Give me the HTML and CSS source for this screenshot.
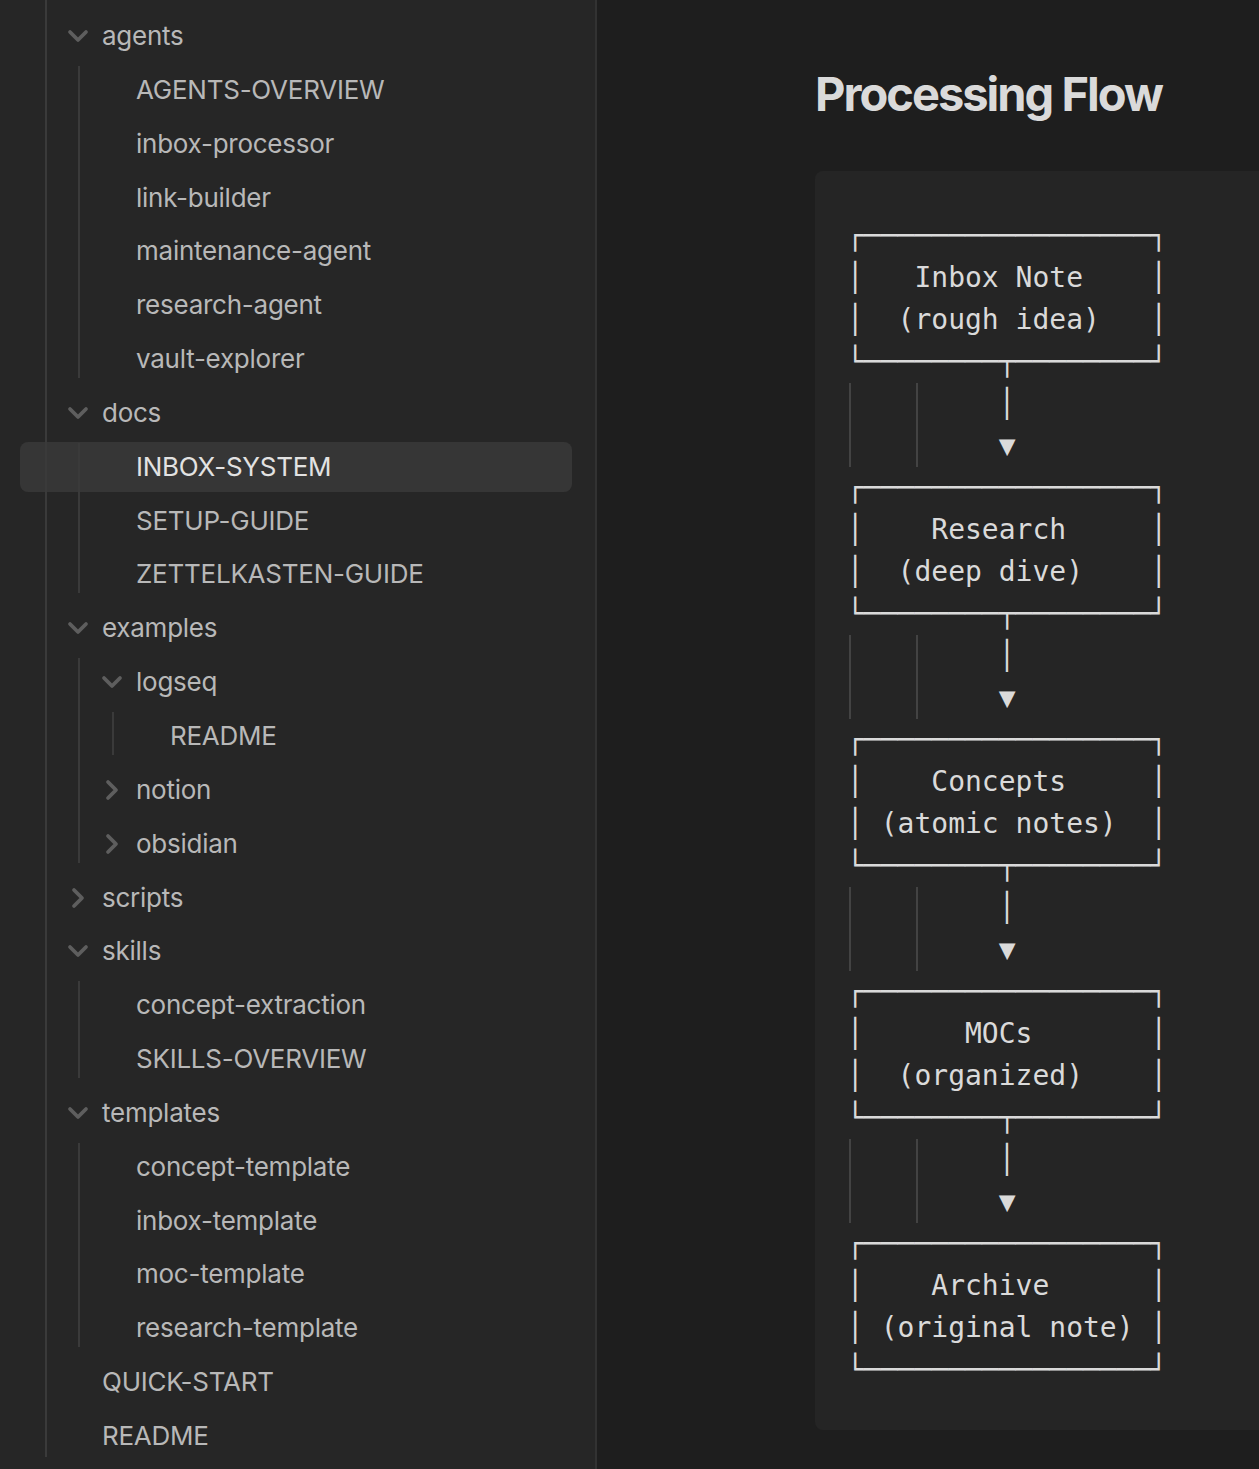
FILE: index.html
```html
<!DOCTYPE html>
<html lang="en">
<head>
<meta charset="utf-8">
<title>INBOX-SYSTEM</title>
<link rel="stylesheet" href="styles.css">
</head>
<body>
<div class="app">
  <aside class="sidebar">
    <div class="tree root">
      <div class="folder">
        <div class="row lvl1"><span class="twist"><svg viewBox="0 0 24 24"><path d="m6 9 6 6 6-6"/></svg></span><span class="label">agents</span></div>
        <div class="children c1">
          <div class="row lvl2"><span class="twist"></span><span class="label">AGENTS-OVERVIEW</span></div>
          <div class="row lvl2"><span class="twist"></span><span class="label">inbox-processor</span></div>
          <div class="row lvl2"><span class="twist"></span><span class="label">link-builder</span></div>
          <div class="row lvl2"><span class="twist"></span><span class="label">maintenance-agent</span></div>
          <div class="row lvl2"><span class="twist"></span><span class="label">research-agent</span></div>
          <div class="row lvl2"><span class="twist"></span><span class="label">vault-explorer</span></div>
        </div>
      </div>
      <div class="folder">
        <div class="row lvl1"><span class="twist"><svg viewBox="0 0 24 24"><path d="m6 9 6 6 6-6"/></svg></span><span class="label">docs</span></div>
        <div class="children c1">
          <div class="row lvl2 active"><span class="twist"></span><span class="label">INBOX-SYSTEM</span></div>
          <div class="row lvl2"><span class="twist"></span><span class="label">SETUP-GUIDE</span></div>
          <div class="row lvl2"><span class="twist"></span><span class="label">ZETTELKASTEN-GUIDE</span></div>
        </div>
      </div>
      <div class="folder">
        <div class="row lvl1"><span class="twist"><svg viewBox="0 0 24 24"><path d="m6 9 6 6 6-6"/></svg></span><span class="label">examples</span></div>
        <div class="children c1">
          <div class="folder">
            <div class="row lvl2"><span class="twist"><svg viewBox="0 0 24 24"><path d="m6 9 6 6 6-6"/></svg></span><span class="label">logseq</span></div>
            <div class="children c2">
              <div class="row lvl3"><span class="twist"></span><span class="label">README</span></div>
            </div>
          </div>
          <div class="row lvl2"><span class="twist"><svg viewBox="0 0 24 24"><path d="m9 18 6-6-6-6"/></svg></span><span class="label">notion</span></div>
          <div class="row lvl2"><span class="twist"><svg viewBox="0 0 24 24"><path d="m9 18 6-6-6-6"/></svg></span><span class="label">obsidian</span></div>
        </div>
      </div>
      <div class="row lvl1"><span class="twist"><svg viewBox="0 0 24 24"><path d="m9 18 6-6-6-6"/></svg></span><span class="label">scripts</span></div>
      <div class="folder">
        <div class="row lvl1"><span class="twist"><svg viewBox="0 0 24 24"><path d="m6 9 6 6 6-6"/></svg></span><span class="label">skills</span></div>
        <div class="children c1">
          <div class="row lvl2"><span class="twist"></span><span class="label">concept-extraction</span></div>
          <div class="row lvl2"><span class="twist"></span><span class="label">SKILLS-OVERVIEW</span></div>
        </div>
      </div>
      <div class="folder">
        <div class="row lvl1"><span class="twist"><svg viewBox="0 0 24 24"><path d="m6 9 6 6 6-6"/></svg></span><span class="label">templates</span></div>
        <div class="children c1">
          <div class="row lvl2"><span class="twist"></span><span class="label">concept-template</span></div>
          <div class="row lvl2"><span class="twist"></span><span class="label">inbox-template</span></div>
          <div class="row lvl2"><span class="twist"></span><span class="label">moc-template</span></div>
          <div class="row lvl2"><span class="twist"></span><span class="label">research-template</span></div>
        </div>
      </div>
      <div class="row lvl1"><span class="twist"></span><span class="label">QUICK-START</span></div>
      <div class="row lvl1"><span class="twist"></span><span class="label">README</span></div>
    </div>
  </aside>
  <main class="main">
    <h1 class="title">Processing Flow</h1>
    <div class="code">
      <div class="ln">┌─────────────────┐</div>
      <div class="ln">│   Inbox Note    │</div>
      <div class="ln">│  (rough idea)   │</div>
      <div class="ln">└────────┬────────┘</div>
      <div class="ln ind">         │</div>
      <div class="ln ind">         ▼</div>
      <div class="ln">┌─────────────────┐</div>
      <div class="ln">│    Research     │</div>
      <div class="ln">│  (deep dive)    │</div>
      <div class="ln">└────────┬────────┘</div>
      <div class="ln ind">         │</div>
      <div class="ln ind">         ▼</div>
      <div class="ln">┌─────────────────┐</div>
      <div class="ln">│    Concepts     │</div>
      <div class="ln">│ (atomic notes)  │</div>
      <div class="ln">└────────┬────────┘</div>
      <div class="ln ind">         │</div>
      <div class="ln ind">         ▼</div>
      <div class="ln">┌─────────────────┐</div>
      <div class="ln">│      MOCs       │</div>
      <div class="ln">│  (organized)    │</div>
      <div class="ln">└────────┬────────┘</div>
      <div class="ln ind">         │</div>
      <div class="ln ind">         ▼</div>
      <div class="ln">┌─────────────────┐</div>
      <div class="ln">│    Archive      │</div>
      <div class="ln">│ (original note) │</div>
      <div class="ln">└─────────────────┘</div>
    </div>
  </main>
</div>
</body>
</html>
```
FILE: styles.css
```css
* { box-sizing: border-box; }
html, body {
  margin: 0;
  padding: 0;
  background: #1e1e1e;
}
.app {
  display: flex;
  width: 1259px;
  height: 1469px;
  overflow: hidden;
}
.sidebar {
  flex: 0 0 597px;
  background: #262626;
  border-right: 2px solid #323232;
  padding: 0 23px 0 20px;
  font-family: Inter, "Noto Sans", sans-serif;
  font-size: 26px;
  letter-spacing: -0.25px;
  color: #b8b8b8;
  overflow: hidden;
}
.tree.root {
  position: relative;
  padding-top: 11px;
}
.tree.root::before,
.children::before {
  content: "";
  position: absolute;
  width: 2px;
  background: #3a3a3a;
  z-index: 1;
}
.tree.root::before { left: 25px; top: 0; bottom: 4px; }
.children { position: relative; }
.children::before { top: 1px; bottom: 6px; }
.children.c1::before { left: 58px; }
.children.c2::before { left: 92px; }
.row {
  display: flex;
  align-items: center;
  height: 50px;
  margin-bottom: 3.85px;
  border-radius: 8px;
  white-space: nowrap;
}
.row.lvl1 { padding-left: 42px; }
.row.lvl2 { padding-left: 76px; }
.row.lvl3 { padding-left: 110px; }
.row.active {
  background: #363636;
  color: #e2e2e2;
}
.twist {
  flex: 0 0 40px;
  height: 32px;
  display: flex;
  align-items: center;
}
.twist svg {
  width: 32px;
  height: 32px;
  fill: none;
  stroke: #5e5e5e;
  stroke-width: 2.8;
  stroke-linecap: round;
  stroke-linejoin: round;
}
.label { line-height: 1; }
.main {
  flex: 1;
  min-width: 0;
  background: #1e1e1e;
  padding: 66px 0 0 218px;
}
.title {
  margin: 0;
  font-family: Inter, "Noto Sans", sans-serif;
  font-weight: 700;
  font-size: 47px;
  line-height: 56px;
  letter-spacing: -2px;
  color: #dadada;
}
.code {
  margin-top: 49px;
  background: #252525;
  border-radius: 8px 0 0 8px;
  padding: 44px 0 39px 32px;
  font-family: "DejaVu Sans Mono", "Liberation Mono", monospace;
  font-size: 28px;
  line-height: 42px;
  color: #dadada;
}
.ln {
  height: 42px;
  white-space: pre;
}
.ln.ind {
  background-image: linear-gradient(#434343, #434343), linear-gradient(#434343, #434343);
  background-size: 2px 100%, 2px 100%;
  background-position: 2px 0, 69px 0;
  background-repeat: no-repeat;
}
```
